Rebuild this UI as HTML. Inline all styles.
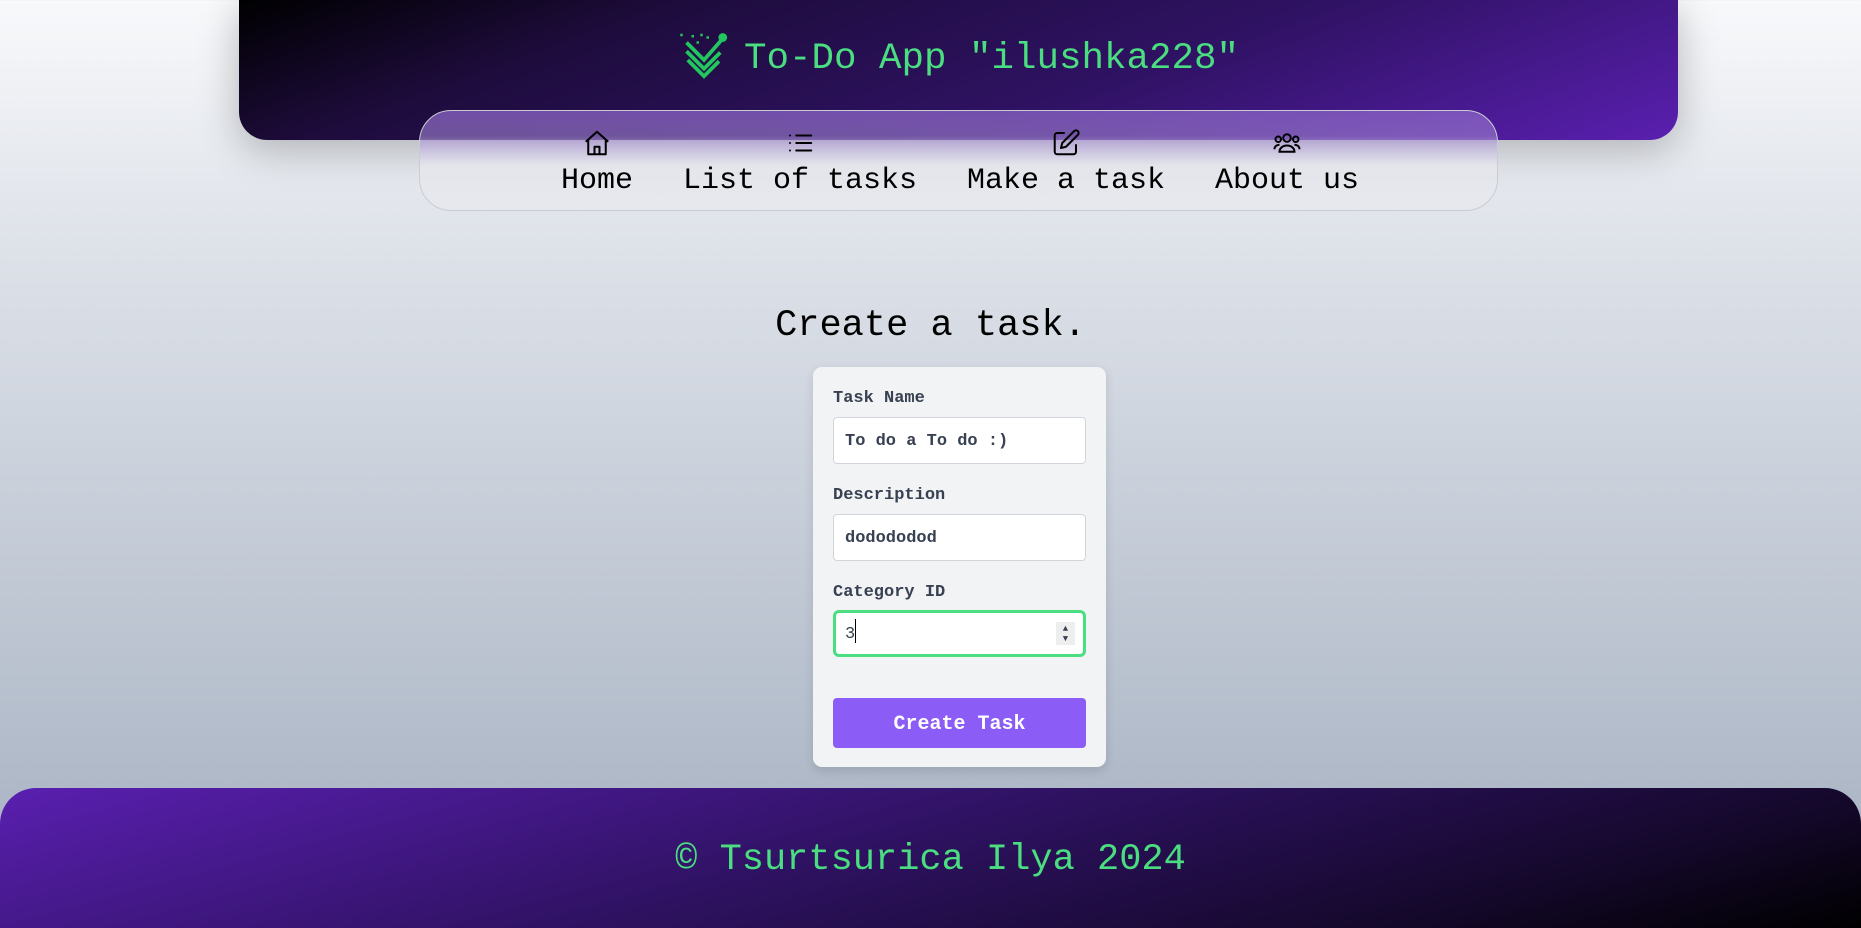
<!DOCTYPE html>
<html><head><meta charset="utf-8"><style>
*{box-sizing:border-box;margin:0;padding:0}
html,body{width:1861px;height:928px;overflow:hidden}
body{font-family:"Liberation Mono",monospace;background:linear-gradient(180deg,#f8f9fb 0%,#dfe3ea 25%,#c7ced9 55%,#a3aebf 100%);position:relative}
.header{position:absolute;left:239px;top:0;width:1439px;height:140px;border-radius:0 0 28px 28px;background:linear-gradient(160deg,#000 0%,#1e0c3d 25%,#2f1263 60%,#5a1fb0 100%);box-shadow:0 10px 40px rgba(0,0,0,.25)}
.title{position:absolute;left:0;right:0;top:30px;text-align:center;color:#4ade80;font-size:37.5px;line-height:54px}
.title svg{vertical-align:-12px;margin-right:14px}
.nav{position:absolute;left:419px;top:110px;width:1079px;height:101px;border-radius:32px;border:1px solid #c9ccd3;background:linear-gradient(180deg,rgba(140,100,200,.75) 0%,rgba(160,130,210,.6) 25%,rgba(228,230,236,.9) 55%,#e6e8ed 100%)}
.item{position:absolute;top:17px;transform:translateX(-50%);text-align:center;font-size:30px;color:#000;white-space:pre}
.item svg{display:block;margin:0 auto 6px}
h1{position:absolute;left:0;top:305px;text-align:center;font-weight:normal;font-size:37px;color:#000;width:100%}
.card{position:absolute;left:813px;top:367px;width:293px;height:400px;background:#f2f3f5;border-radius:9px;box-shadow:0 4px 10px rgba(0,0,0,.12)}
.lab{position:absolute;left:20px;font-size:17px;color:#374151;font-weight:bold}
.inp{position:absolute;left:20px;width:253px;height:47px;background:#fff;border:1px solid #d1d5db;border-radius:4px;font-size:17px;color:#374151;padding-left:11px;line-height:47px;font-weight:bold}
.btn{position:absolute;left:20px;top:331px;width:253px;height:50px;background:#8b5cf6;border-radius:4px;color:#fff;font-weight:bold;font-size:20px;text-align:center;line-height:54px}
.footer{position:absolute;left:0;top:788px;width:1861px;height:140px;border-radius:36px 36px 0 0;background:linear-gradient(165deg,#5a1fb0 0%,#2f1263 45%,#14082a 80%,#000 100%);color:#4ade80;font-size:37px;text-align:center;line-height:144px}
</style></head><body>
<div class="header"><div class="title"><svg width="52" height="50" viewBox="0 0 40 40"><g fill="none" stroke="#22c55e" stroke-width="3"><path d="M6 10 L20 24 L34 8"/><path d="M6 17 L20 31 L33 18"/><path d="M7 24 L20 37 L32 25"/></g><circle cx="35" cy="6" r="3.5" fill="#22c55e"/><g fill="#22c55e"><rect x="1" y="3" width="2" height="2"/><rect x="10" y="4" width="2" height="2"/><rect x="17" y="3" width="2" height="2"/><rect x="14" y="9" width="2" height="2"/><rect x="22" y="5" width="2" height="2"/></g></svg>To-Do App "ilushka228"</div></div>
<div class="nav">
<div class="item" style="left:177px"><svg width="30" height="30" viewBox="0 0 24 24" fill="none" stroke="#000" stroke-width="1.6" stroke-linejoin="round"><path d="M3 11 L12 3 L21 11 M5 9.5 V21 H19 V9.5 M10 21 V15 H14 V21"/></svg>Home</div>
<div class="item" style="left:380px"><svg width="30" height="30" viewBox="0 0 24 24" fill="none" stroke="#000" stroke-width="1.6" stroke-linecap="round"><path d="M9 6H21M9 12H21M9 18H21M4 6h.01M4 12h.01M4 18h.01"/></svg>List of tasks</div>
<div class="item" style="left:646px"><svg width="30" height="30" viewBox="0 0 24 24" fill="none" stroke="#000" stroke-width="1.6" stroke-linejoin="round"><path d="M11 4H5a2 2 0 0 0-2 2v13a2 2 0 0 0 2 2h13a2 2 0 0 0 2-2v-6M18.5 2.5a2.1 2.1 0 0 1 3 3L12 15l-4 1 1-4z"/></svg>Make a task</div>
<div class="item" style="left:867px"><svg width="30" height="30" viewBox="0 0 24 24" fill="none" stroke="#000" stroke-width="1.6"><circle cx="12" cy="8" r="3"/><circle cx="5" cy="9" r="2.2"/><circle cx="19" cy="9" r="2.2"/><path d="M6 19a6 5 0 0 1 12 0z"/><path d="M2 17a3.5 3.5 0 0 1 4-3.5M22 17a3.5 3.5 0 0 0-4-3.5"/></svg>About us</div>
</div>
<h1>Create a task.</h1>
<div class="card">
<div class="lab" style="top:22px">Task Name</div>
<div class="inp" style="top:50px">To do a To do :)</div>
<div class="lab" style="top:119px">Description</div>
<div class="inp" style="top:147px">dodododod</div>
<div class="lab" style="top:216px">Category ID</div>
<div class="inp" style="top:243px;border:3px solid #4ade80;border-radius:6px;line-height:43px;padding-left:9px;font-weight:normal">3<span style="display:inline-block;width:1px;height:24px;background:#000;vertical-align:-5px"></span><span style="position:absolute;right:8px;top:9px;width:19px;height:23px;background:#eee;font-size:9px;line-height:10px;text-align:center;padding-top:2px">▲<br>▼</span></div>
<div class="btn">Create Task</div>
</div>
<div class="footer">© Tsurtsurica Ilya 2024</div>
</body></html>
